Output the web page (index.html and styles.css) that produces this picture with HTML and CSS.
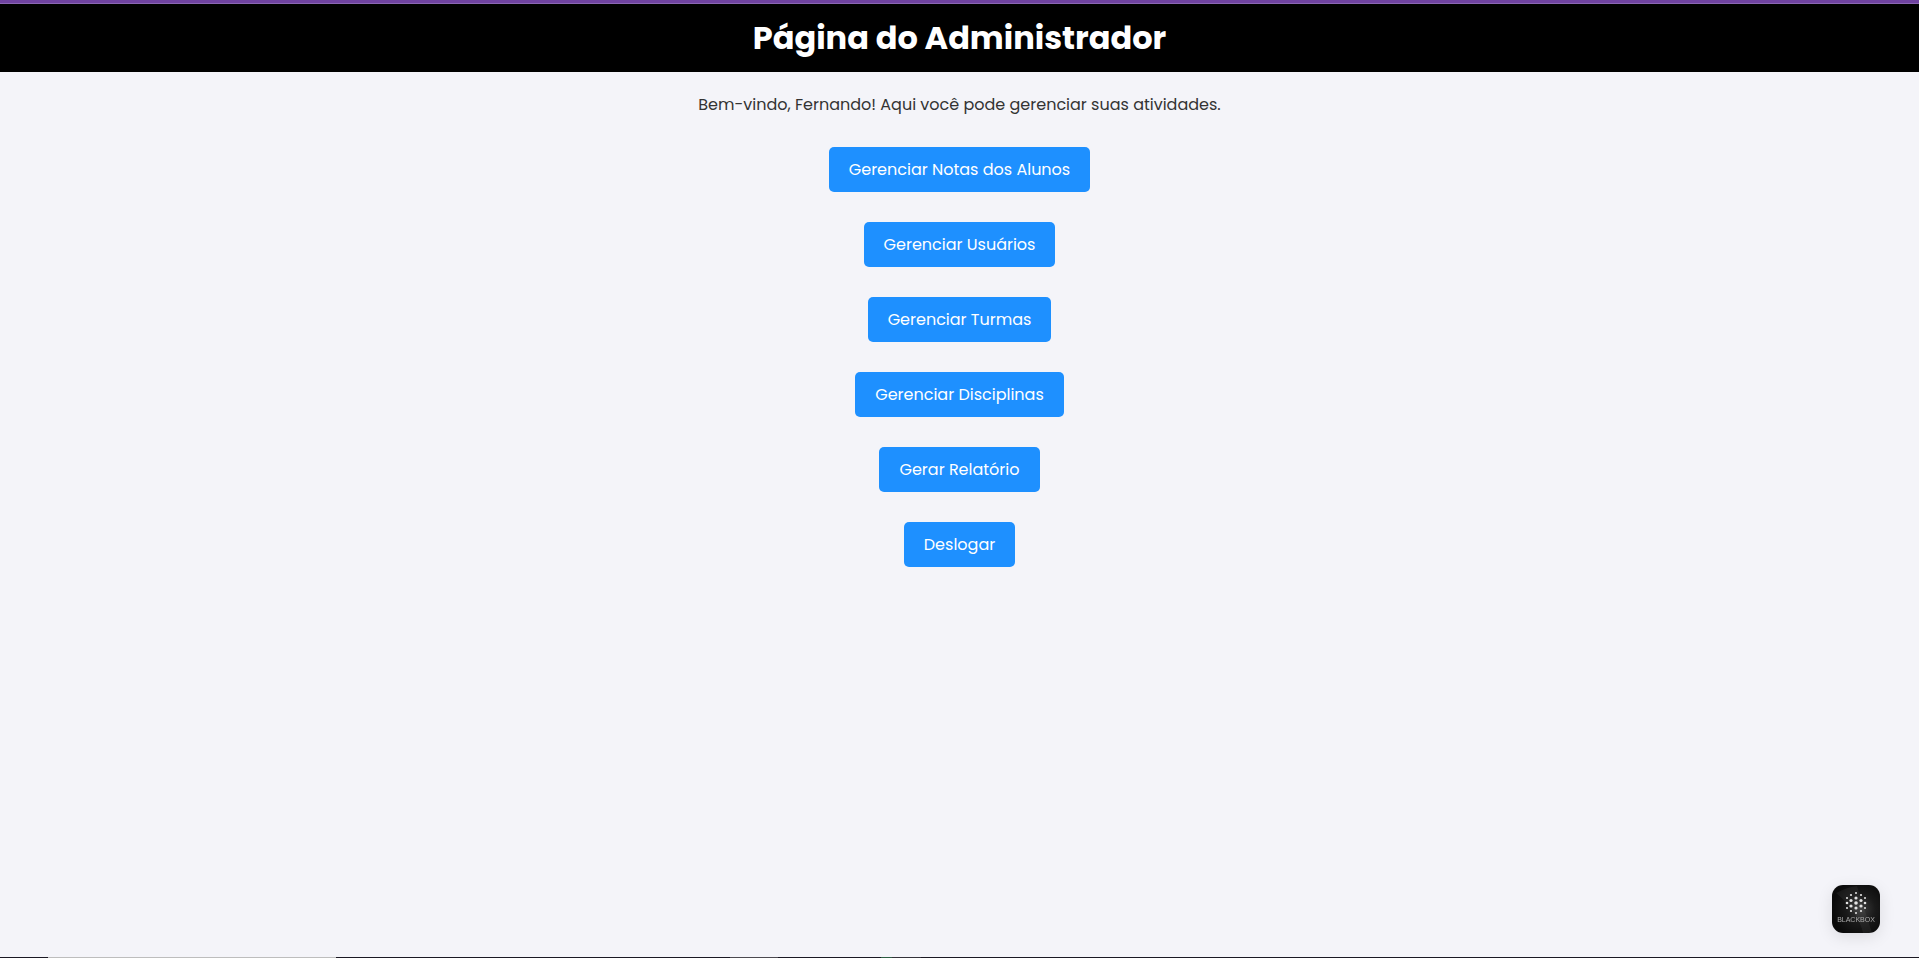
FILE: index.html
```html
<!DOCTYPE html>
<html lang="pt-BR">
<head>
<meta charset="utf-8">
<meta name="viewport" content="width=device-width, initial-scale=1">
<title>Página do Administrador</title>
<link rel="stylesheet" href="styles.css">
</head>
<body>
<div class="top-strip"></div>
<header class="header"><h1 class="title">Página do Administrador</h1></header>
<main class="content">
  <p class="welcome">Bem-vindo, Fernando! Aqui você pode gerenciar suas atividades.</p>
  <nav class="actions">
    <a class="action" href="#notas">Gerenciar Notas dos Alunos</a>
    <a class="action" href="#usuarios">Gerenciar Usuários</a>
    <a class="action" href="#turmas">Gerenciar Turmas</a>
    <a class="action" href="#disciplinas">Gerenciar Disciplinas</a>
    <a class="action" href="#relatorio">Gerar Relatório</a>
    <a class="action" href="#sair">Deslogar</a>
  </nav>
</main>
<div class="bottom-strip"></div>
<button class="assistant" type="button" aria-label="Blackbox">
  <svg class="assistant-logo" viewBox="0 0 48 48" aria-hidden="true">
    <defs>
      <radialGradient id="glow" cx="0.6" cy="0.5" r="0.6">
        <stop offset="0" stop-color="#3c3c3c"/>
        <stop offset="0.5" stop-color="#1a1a1a"/>
        <stop offset="1" stop-color="#0a0a0a"/>
      </radialGradient>
    </defs>
    <rect width="48" height="48" rx="11" fill="url(#glow)"/>
    <path d="M4 8Q15 2 25 1L40 48H31Q26 26 4 8Z" fill="#fff" opacity="0.05"/>
    <g fill="#e4e4e4">
      <circle cx="24" cy="8" r="1"/><circle cx="24" cy="13" r="1.6"/><circle cx="24" cy="18" r="1.8"/><circle cx="24" cy="23" r="1.6"/><circle cx="24" cy="28" r="1"/>
      <circle cx="19" cy="10" r="1.1"/><circle cx="19" cy="15.500" r="1.6"/><circle cx="19" cy="21" r="1.6"/><circle cx="19" cy="26" r="1.1"/>
      <circle cx="29" cy="10" r="1.1"/><circle cx="29" cy="15.500" r="1.6"/><circle cx="29" cy="21" r="1.6"/><circle cx="29" cy="26" r="1.1"/>
      <circle cx="15" cy="13" r="1"/><circle cx="15" cy="18" r="1.3"/><circle cx="15" cy="23" r="1"/>
      <circle cx="33" cy="13" r="1"/><circle cx="33" cy="18" r="1.3"/><circle cx="33" cy="23" r="1"/>
    </g>
    <text class="assistant-name" x="24" y="37" text-anchor="middle">BLACKBOX</text>
  </svg>
</button>
</body>
</html>
```
FILE: styles.css
```css
* {
  box-sizing: border-box;
}

body {
  margin: 0;
  min-height: 100vh;
  display: flex;
  flex-direction: column;
  background: #f4f4f9;
  color: #333;
  font-family: Poppins, Inter, sans-serif;
  font-size: 16px;
  line-height: 25px;
}

.top-strip {
  height: 4px;
  background: #6f42a0;
  border-bottom: 1px solid #8a66b4;
}

.header {
  padding: 10px 20px;
  background: #000;
  color: #fff;
  text-align: center;
}

.title {
  margin: 0;
  font-size: 32px;
  line-height: 48px;
  font-weight: 700;
}

.content {
  flex: 1;
  padding: 20px;
  text-align: center;
}

.welcome {
  margin: 0;
}

.actions {
  display: flex;
  flex-direction: column;
  align-items: center;
  gap: 30px;
  margin-top: 30px;
}

.action {
  padding: 10px 20px;
  border-radius: 5px;
  background: #1e90ff;
  color: #fff;
  text-decoration: none;
}

.bottom-strip {
  height: 1px;
  background:
    linear-gradient(#bdbdbd, #bdbdbd) 48px 0 / 288px 1px no-repeat,
    linear-gradient(#4c4a50, #4c4a50) 730px 0 / 48px 1px no-repeat,
    linear-gradient(#2c5c42, #2c5c42) 881px 0 / 11px 1px no-repeat,
    linear-gradient(#34323a, #34323a) 892px 0 / 29px 1px no-repeat,
    #1a1823;
}

.assistant {
  position: fixed;
  right: 39px;
  bottom: 25px;
  width: 48px;
  height: 48px;
  padding: 0;
  border: 0;
  border-radius: 11px;
  background: none;
  box-shadow: 0 4px 16px rgba(0, 0, 0, 0.1);
  cursor: pointer;
}

.assistant-logo {
  display: block;
  width: 100%;
  height: 100%;
}

.assistant-name {
  fill: #aaa;
  font-family: "Liberation Sans", sans-serif;
  font-size: 7px;
}
```
